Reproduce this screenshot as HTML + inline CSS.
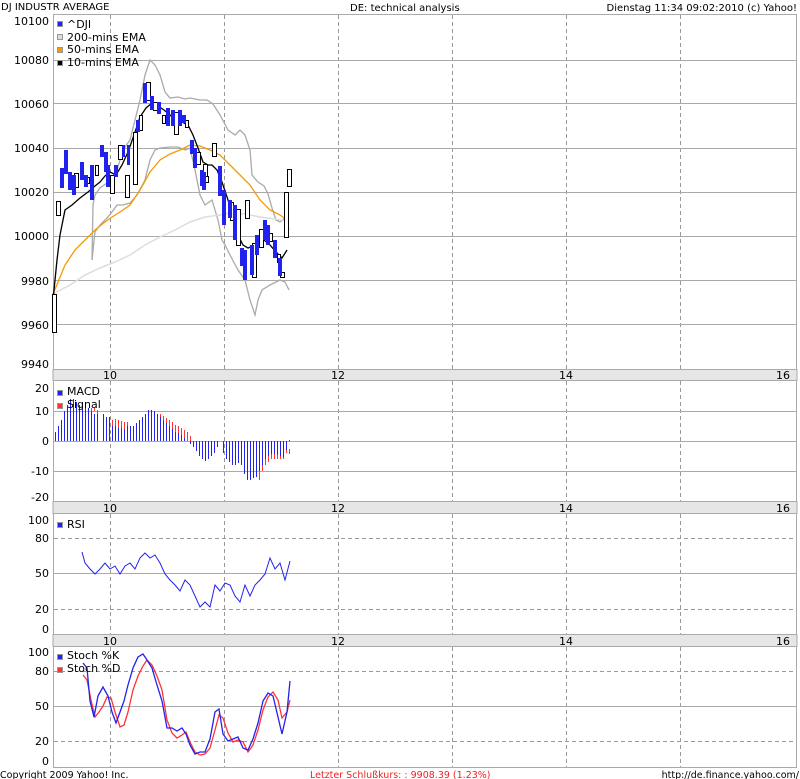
<!DOCTYPE html>
<html><head><meta charset="utf-8"><style>
html,body{margin:0;padding:0;background:#fff;}
svg{display:block;font-family:"DejaVu Sans","Liberation Sans",sans-serif;}
</style></head><body>
<svg width="800" height="779" viewBox="0 0 800 779" xmlns="http://www.w3.org/2000/svg">
<rect width="800" height="779" fill="#fff"/>
<text x="1" y="10" font-size="10" fill="#000">DJ INDUSTR AVERAGE</text>
<text x="350" y="11" font-size="10" fill="#000">DE: technical analysis</text>
<text x="797" y="11" font-size="10" fill="#000" text-anchor="end">Dienstag 11:34 09:02:2010 (c) Yahoo!</text>

<g fill="none" stroke="#aaa" stroke-width="1">
<rect x="53.5" y="14.5" width="743" height="355"/>
<rect x="53.5" y="380.5" width="743" height="121"/>
<rect x="53.5" y="513.5" width="743" height="121"/>
<rect x="53.5" y="646.5" width="743" height="121"/>
</g>
<rect x="53" y="369.5" width="744" height="11" fill="#e6e6e6" stroke="#aaa"/>
<rect x="53" y="501.5" width="744" height="12" fill="#e6e6e6" stroke="#aaa"/>
<rect x="53" y="634.5" width="744" height="12" fill="#e6e6e6" stroke="#aaa"/>
<g font-size="11" fill="#000" text-anchor="middle">
<text x="110" y="379">10</text><text x="338" y="379">12</text><text x="566" y="379">14</text><text x="783" y="379">16</text>
<text x="110" y="512">10</text><text x="338" y="512">12</text><text x="566" y="512">14</text><text x="783" y="512">16</text>
<text x="110" y="645">10</text><text x="338" y="645">12</text><text x="566" y="645">14</text><text x="783" y="645">16</text>
</g>
<g stroke="#999" stroke-dasharray="4,3" stroke-width="1">
<path d="M110.5 15V369M224.5 15V369M338.5 15V369M452.5 15V369M566.5 15V369M680.5 15V369"/>
<path d="M110.5 381V501M224.5 381V501M338.5 381V501M452.5 381V501M566.5 381V501M680.5 381V501"/>
<path d="M110.5 514V634M224.5 514V634M338.5 514V634M452.5 514V634M566.5 514V634M680.5 514V634"/>
<path d="M110.5 647V767M224.5 647V767M338.5 647V767M452.5 647V767M566.5 647V767M680.5 647V767"/>
<path d="M54 538.5H796M54 609.5H796M54 671.5H796M54 741.5H796"/>
</g>
<g stroke="#aaa" stroke-width="1">
<path d="M54 60.5H796M54 103.5H796M54 148.5H796M54 192.5H796M54 236.5H796M54 280.5H796M54 324.5H796"/>
<path d="M54 411.5H796M54 441.5H796M54 471.5H796"/>
<path d="M54 573.5H796"/>
<path d="M54 706.5H796"/>
</g>
<g font-size="11" fill="#000" text-anchor="end">
<text x="49" y="25">10100</text><text x="49" y="64">10080</text><text x="49" y="108">10060</text><text x="49" y="152">10040</text><text x="49" y="196">10020</text><text x="49" y="240">10000</text><text x="49" y="285">9980</text><text x="49" y="329">9960</text><text x="49" y="368">9940</text>
<text x="49" y="392">20</text><text x="49" y="415">10</text><text x="49" y="445">0</text><text x="49" y="475">-10</text><text x="49" y="501">-20</text>
<text x="49" y="524">100</text><text x="49" y="542">80</text><text x="49" y="577">50</text><text x="49" y="613">20</text><text x="49" y="633">0</text>
<text x="49" y="656">100</text><text x="49" y="675">80</text><text x="49" y="710">50</text><text x="49" y="745">20</text><text x="49" y="765">0</text>
</g>

<polyline fill="none" stroke="#aaa" stroke-width="1.3" points="92,260 93,205 95,195 100,188 107,183 112,180 117,170 123,150 130,140 135,120 140,100 145,75 150,60 155,65 160,75 165,92 170,98 178,97 185,99 190,98 200,100 207,100 213,104 220,115 228,130 235,135 240,130 245,135 250,150 252,175 258,182 264,186 268,194 272,208 276,220 280,222 285,218 289,230"/>
<polyline fill="none" stroke="#aaa" stroke-width="1.3" points="92,260 95,232 100,225 107,218 112,212 117,205 123,205 130,203 137,195 145,180 150,160 155,150 160,148 170,147 178,147 185,150 190,148 195,170 200,195 205,205 212,200 218,220 222,240 225,245 230,255 238,270 245,280 250,300 255,315 258,300 262,290 270,285 280,280 285,282 289,290"/>
<polyline fill="none" stroke="#ddd" stroke-width="1.5" points="53,294 70,285 85,275 100,268 115,262 130,255 145,245 160,237 175,230 190,222 205,217 220,215 230,213 245,214 260,217 275,219 287,221"/>
<polyline fill="none" stroke="#f59a00" stroke-width="1.3" points="53,294 58,282 65,265 75,250 85,240 95,230 105,222 112,217 120,212 130,205 140,190 150,172 160,160 170,154 180,150 190,145 200,146 210,150 220,155 230,165 240,175 250,185 260,200 270,210 280,215 287,220"/>
<polyline fill="none" stroke="#000" stroke-width="1.3" points="53,300 57,260 60,235 65,210 72,205 80,198 88,192 95,186 100,182 105,176 110,172 116,175 122,165 128,152 134,135 140,117 146,108 152,103 158,106 164,110 170,115 176,120 182,122 188,125 193,135 198,148 203,162 208,165 212,165 217,170 222,182 228,200 233,218 238,235 243,245 248,248 253,246 258,243 264,240 270,245 276,252 282,258 287,250"/>
<g stroke-width="1">
<g fill="#fff" stroke="#000">
<rect x="52.5" y="294.5" width="4" height="38"/>
<rect x="56.5" y="201.5" width="4" height="14"/>
<rect x="74.5" y="173.5" width="4" height="14"/>
<rect x="86.5" y="177.5" width="3" height="6"/>
<rect x="95.5" y="165.5" width="3" height="10"/>
<rect x="110.5" y="175.5" width="4" height="18"/>
<rect x="118.5" y="145.5" width="4" height="14"/>
<rect x="125.5" y="175.5" width="4" height="22"/>
<rect x="133.5" y="132.5" width="4" height="52"/>
<rect x="139.5" y="115.5" width="3" height="15"/>
<rect x="146.5" y="82.5" width="4" height="18"/>
<rect x="153.5" y="102.5" width="4" height="8"/>
<rect x="162.5" y="115.5" width="3" height="8"/>
<rect x="174.5" y="112.5" width="4" height="22"/>
<rect x="185.5" y="120.5" width="3" height="7"/>
<rect x="196.5" y="152.5" width="4" height="12"/>
<rect x="203.5" y="164.5" width="4" height="14"/>
<rect x="212.5" y="143.5" width="4" height="13"/>
<rect x="205.5" y="176.5" width="3" height="6"/>
<rect x="230.5" y="202.5" width="3" height="18"/>
<rect x="236.5" y="209.5" width="4" height="36"/>
<rect x="245.5" y="200.5" width="4" height="18"/>
<rect x="252.5" y="243.5" width="4" height="34"/>
<rect x="259.5" y="229.5" width="4" height="18"/>
<rect x="269.5" y="233.5" width="3" height="8"/>
<rect x="277.5" y="254.5" width="3" height="8"/>
<rect x="280.5" y="272.5" width="4" height="5"/>
<rect x="284.5" y="192.5" width="4" height="45"/>
<rect x="287.5" y="169.5" width="4" height="17"/>
</g>
<g fill="#2222ee">
<rect x="60" y="168" width="4" height="20"/>
<rect x="64" y="150" width="4" height="24"/>
<rect x="68" y="172" width="4" height="18"/>
<rect x="72" y="175" width="4" height="20"/>
<rect x="80" y="162" width="4" height="18"/>
<rect x="84" y="175" width="4" height="12"/>
<rect x="90" y="165" width="4" height="35"/>
<rect x="100" y="145" width="4" height="12"/>
<rect x="104" y="152" width="4" height="20"/>
<rect x="106" y="165" width="4" height="22"/>
<rect x="114" y="165" width="4" height="12"/>
<rect x="122" y="145" width="3" height="12"/>
<rect x="127" y="145" width="3" height="20"/>
<rect x="136" y="120" width="4" height="12"/>
<rect x="143" y="83" width="4" height="20"/>
<rect x="150" y="96" width="4" height="14"/>
<rect x="157" y="102" width="4" height="12"/>
<rect x="166" y="108" width="4" height="18"/>
<rect x="171" y="110" width="4" height="16"/>
<rect x="178" y="110" width="4" height="16"/>
<rect x="182" y="115" width="4" height="8"/>
<rect x="190" y="140" width="4" height="14"/>
<rect x="193" y="148" width="4" height="20"/>
<rect x="200" y="170" width="4" height="16"/>
<rect x="202" y="172" width="4" height="18"/>
<rect x="218" y="166" width="4" height="30"/>
<rect x="222" y="190" width="4" height="35"/>
<rect x="228" y="200" width="4" height="18"/>
<rect x="233" y="205" width="4" height="35"/>
<rect x="240" y="248" width="4" height="18"/>
<rect x="243" y="250" width="4" height="30"/>
<rect x="250" y="245" width="4" height="30"/>
<rect x="255" y="235" width="4" height="20"/>
<rect x="263" y="220" width="4" height="20"/>
<rect x="266" y="225" width="4" height="20"/>
<rect x="273" y="240" width="4" height="18"/>
<rect x="278" y="258" width="4" height="18"/>
</g>
</g>
<g font-size="11" fill="#000">
<rect x="57.5" y="21.5" width="5" height="5" fill="#2222ee" stroke="#999"/><text x="67" y="28">^DJI</text>
<rect x="57.5" y="34.5" width="5" height="5" fill="#ddd" stroke="#999"/><text x="67" y="41">200-mins EMA</text>
<rect x="57.5" y="47.5" width="5" height="5" fill="#f59a00" stroke="#999"/><text x="67" y="53">50-mins EMA</text>
<rect x="57.5" y="60.5" width="5" height="5" fill="#000" stroke="#999"/><text x="67" y="66">10-mins EMA</text>
</g>

<g transform="translate(0.5,0)">
<path stroke="#ff3333" stroke-width="1" fill="none" d="M91 411V408M94 411V408M97 414V410M112 426V420M115 426V419M118 428V420M121 428V421M124 429V422M127 426V422M160 417V414M163 420V416M166 423V418M169 426V420M172 429V422M175 432V425M178 433V426M181 435V428M184 438V430M187 441V432M190 444V436M259 480V471M262 471V465M265 465V459M268 462V456M271 459V454M274 459V454M277 459V455M280 459V456M283 459V457M286 450V453M289 449V454"/>
<path stroke="#2222ee" stroke-width="1" fill="none" d="M55 441V432M58 441V426M61 441V420M64 441V411M67 441V405M70 441V399M73 441V399M76 441V402M79 441V405M82 441V405M85 441V408M88 441V408M91 441V411M94 441V414M97 441V414M103 441V414M106 441V417M109 441V417M112 441V426M115 441V426M118 441V428M121 441V428M124 441V429M127 441V426M130 441V426M133 441V426M136 441V423M139 441V420M142 441V417M145 441V414M148 441V410M151 441V410M154 441V411M157 441V414M160 441V417M163 441V420M166 441V423M169 441V426M172 441V429M175 441V432M178 441V433M181 441V435M184 441V438M187 441V441M190 441V444M193 441V447M196 441V451M199 441V456M202 441V459M205 441V461M208 441V459M211 441V456M214 441V453M217 441V447M223 441V453M226 441V459M229 441V462M232 441V465M235 441V465M238 441V463M241 441V465M244 441V474M247 441V480M250 441V480M253 441V478M256 441V477M259 441V471M262 441V465M265 441V459M268 441V456M271 441V454M274 441V454M277 441V455M280 441V456M283 441V457M286 441V450M289 441V440"/>
</g>
<g font-size="11" fill="#000">
<rect x="57.5" y="390.5" width="5" height="5" fill="#2222ee" stroke="#999"/><text x="67" y="395">MACD</text>
<rect x="57.5" y="403.5" width="5" height="5" fill="#ff3333" stroke="#999"/><text x="67" y="408">Signal</text>
</g>

<polyline fill="none" stroke="#2222ee" stroke-width="1" points="82,552 85,563 90,569 95,574 100,569 105,563 110,569 115,566 120,574 125,566 130,563 135,569 140,558 145,553 150,558 155,555 160,563 165,574 170,580 175,585 180,591 185,580 190,585 195,596 200,607 205,602 210,607 215,585 220,591 225,583 230,585 235,596 240,602 245,585 250,596 255,585 260,580 265,574 270,558 275,569 280,563 285,580 290,561"/>
<g font-size="11" fill="#000">
<rect x="57.5" y="522.5" width="5" height="5" fill="#2222ee" stroke="#999"/><text x="67" y="528">RSI</text>
</g>

<polyline fill="none" stroke="#ff3333" stroke-width="1.3" points="83,675 87,680 91,700 95,717 99,712 103,706 107,697 111,698 115,712 120,727 124,725 128,712 133,690 138,676 143,666 147,660 152,665 157,676 162,690 167,720 172,733 177,738 182,735 186,732 190,742 195,752 200,755 205,754 210,748 215,730 219,715 223,718 228,733 233,742 238,740 243,742 248,752 253,745 258,730 263,710 268,697 273,692 278,700 282,718 287,712 290,700"/>
<polyline fill="none" stroke="#2222ee" stroke-width="1.3" points="83,663 87,668 90,701 94,717 98,696 103,687 108,696 112,712 116,723 120,712 124,701 128,685 133,668 138,657 143,654 147,660 152,668 157,685 162,701 167,728 172,728 177,731 182,728 186,734 190,745 195,754 200,752 205,752 210,739 215,712 219,709 223,734 228,741 233,739 238,737 243,748 248,750 253,739 258,723 263,701 268,693 273,696 278,717 282,734 287,712 290,681"/>
<g font-size="11" fill="#000">
<rect x="57.5" y="654.5" width="5" height="5" fill="#2222ee" stroke="#999"/><text x="67" y="659">Stoch %K</text>
<rect x="57.5" y="667.5" width="5" height="5" fill="#ff3333" stroke="#999"/><text x="67" y="672">Stoch %D</text>
</g>

<text x="0" y="778" font-size="9.5" fill="#000">Copyright 2009 Yahoo! Inc.</text>
<text x="310" y="778" font-size="9.5" fill="#ee2222">Letzter Schlußkurs: : 9908.39 (1.23%)</text>
<text x="799" y="778" font-size="9.5" fill="#000" text-anchor="end">http://de.finance.yahoo.com/</text>
</svg>
</body></html>
